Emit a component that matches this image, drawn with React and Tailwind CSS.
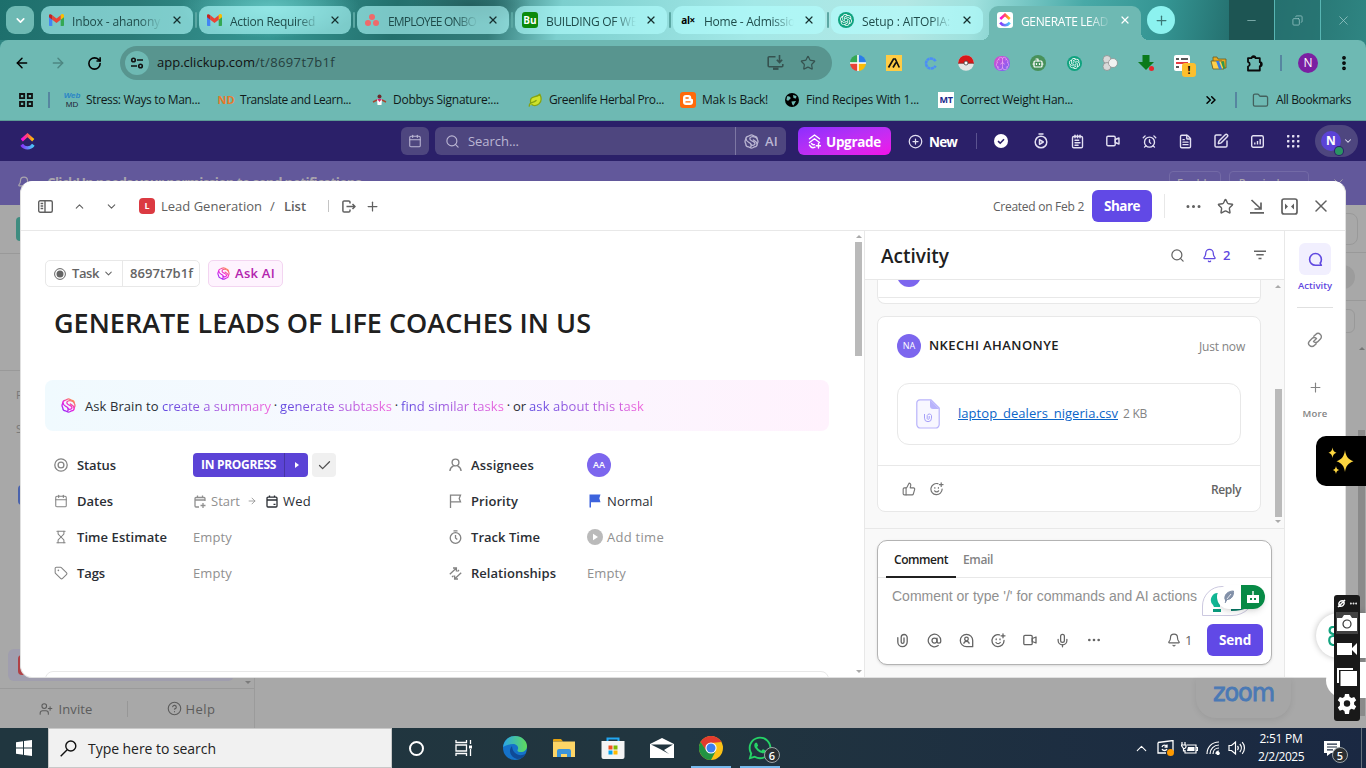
import { useLayoutEffect, useRef } from "react";
import {
  X, Plus, ArrowLeft, ArrowRight, RotateCw, ChevronDown, ChevronUp, Star, EllipsisVertical, Folder,
  ChevronsRight, Calendar, Search, CirclePlus, NotepadText, Video, AlarmClock, FileText, SquarePen,
  Ellipsis, Bell, Link2, ThumbsUp, AtSign, Mic, Check, Tag, Minus, Copy,
  CircleHelp, Leaf, Bot, Brain, Volume2, LogOut, Hourglass, UserPlus,
} from "lucide-react";
import { FaWhatsapp, FaBlogger } from "react-icons/fa";
import { SiOpenai } from "react-icons/si";

/* Text set to an exact width by spreading the difference over its letters. */
function Fit({ w, flat, className = "", children }) {
  const ref = useRef(null);
  useLayoutEffect(() => {
    const el = ref.current;
    el.style.letterSpacing = "0px";
    const natural = el.getBoundingClientRect().width;
    el.style.letterSpacing = (w - natural) / children.length + "px";
  }, [w, children]);
  return <span ref={ref} className={"inline-block shrink-0 whitespace-pre " + (flat ? "" : "translate-y-px ") + className}>{children}</span>;
}

const Cell = ({ className = "", children }) => (
  <div className={"flex shrink-0 items-center justify-center " + className}>{children}</div>
);

/* ---------- logos ---------- */
const Gmail = () => (
  <svg width="15" height="12" viewBox="0 0 15 12">
    <path d="M0 2v9.200c0 .4.3.8.8.8H3.300V5.500z" fill="#4285f4" />
    <path d="M15 2v9.200c0 .4-.3.8-.8.8h-2.500V5.500z" fill="#34a853" />
    <path d="M11.700 1.200v4.600L15 3.200V1.700C15 .2 13.300-.6 12.100.4z" fill="#fbbc04" />
    <path d="M3.300 5.800V1.200l4.200 3.200 4.200-3.200v4.600L7.500 9z" fill="#ea4335" />
    <path d="M0 1.700v1.500l3.300 2.600V1.200L2.900.9C1.700-.1 0 .2 0 1.700z" fill="#c5221f" />
  </svg>
);
const Asana = () => (
  <svg width="14" height="13" viewBox="0 0 14 13" fill="#f06a6a">
    <circle cx="7" cy="3" r="3" /><circle cx="3" cy="9" r="3" /><circle cx="11" cy="9" r="3" />
  </svg>
);
const ClickUp = ({ s = 16 }) => (
  <svg width={s} height={s} viewBox="0 0 16 16" fill="none" strokeWidth="3">
    <defs>
      <linearGradient id="cuTop" x1="0" x2="1"><stop stopColor="#ff02f0" /><stop offset=".5" stopColor="#ff5060" /><stop offset="1" stopColor="#ffc800" /></linearGradient>
      <linearGradient id="cuBot" x1="0" x2="1"><stop stopColor="#8930fd" /><stop offset="1" stopColor="#49ccf9" /></linearGradient>
    </defs>
    <path d="M2.600 6.800 8 2l5.400 4.800" stroke="url(#cuTop)" />
    <path d="M2.500 11C5.500 15 10.500 15 13.500 11" stroke="url(#cuBot)" />
  </svg>
);
const BrainIcon = ({ s = 15, grad }) => (
  <svg width={s} height={s} viewBox="0 0 16 16" fill="none" stroke={grad ? "url(#brainG)" : "currentColor"} strokeWidth="1.400" strokeLinejoin="round" strokeLinecap="round">
    <defs><linearGradient id="brainG" gradientUnits="userSpaceOnUse" x1="2" y1="15" x2="13" y2="1"><stop stopColor="#8a2cff" /><stop offset=".5" stopColor="#f01fd8" /><stop offset="1" stopColor="#ff9a3d" /></linearGradient></defs>
    <path d="M8 1c1.300 0 2 .9 3.200 1.200 1.600.3 2.800 1.100 2.800 2.600 0 1 .9 1.700.9 3.200s-.9 2.200-.9 3.200c0 1.500-1.200 2.300-2.800 2.600C10 14.100 9.300 15 8 15s-2-.9-3.200-1.200C3.200 13.500 2 12.700 2 11.200c0-1-.9-1.700-.9-3.200S2 5.800 2 4.800c0-1.500 1.200-2.300 2.800-2.600C6 1.900 6.700 1 8 1z" />
    <path d="M13.700 4.800C12.500 3 9.500 2.300 7.500 3.200 5.500 4.200 6 6.300 8 7.200s3.700 1.200 3.700 3c0 1.900-2.500 2.400-4.400 1.300" />
    <path d="M2.200 5.300c.2 2.800 2.300 3.300 4.200 4.300 1.700 1 1.700 3.200.5 4.600M14 10.500c-.3-2.500-2.200-3.300-4-4.200" />
  </svg>
);
const Clip = ({ s = 16 }) => (
  <svg width={s} height={s} viewBox="0 0 16 16" fill="none" stroke="currentColor" strokeWidth="1.400" strokeLinecap="round"><path d="M3 5v4.500a5 5 0 0 0 10 0V4.800a3.200 3.200 0 0 0-6.400 0v4.700a1.500 1.500 0 0 0 3 0V5.200" /></svg>
);

/* ---------- browser ---------- */
const tabs = [
  { icon: <Gmail />, label: "Inbox - ahanony", w: 88 },
  { icon: <Gmail />, label: "Action Required", w: 85 },
  { icon: <Asana />, label: "EMPLOYEE ONBO", w: 88 },
  { icon: <span className="grid size-4 place-items-center rounded-[3px] bg-[#0b8a0b] text-[10px] font-bold text-white">Bu</span>, label: "BUILDING OF WE", w: 91 },
  { icon: <span className="text-[10px] font-bold tracking-[-0.5px] text-black">al×</span>, label: "Home - Admissio", w: 91 },
  { icon: <span className="grid size-4 place-items-center rounded-full bg-[#10a37f] text-white"><SiOpenai size={12} /></span>, label: "Setup : AITOPIA:", w: 88 },
];

function TabStrip() {
  return (
    <div className="flex h-10 shrink-0 items-start bg-[radial-gradient(ellipse_90px_30px_at_270px_8px,#5fc0bd,transparent),radial-gradient(ellipse_60px_20px_at_470px_5px,#24605f,transparent),linear-gradient(100deg,#1d6f6c_0,#2a7a77_10%,#359693_20%,#23706d_29%,#347d7b_36%,#7ccfce_41%,#a3e8e7_55%,#b3e7e4_66%,#9fe1de_71%,#48a9a7_79%,#349492_85%,#226a69_91%,#2f8582_100%)] pt-1.5">
      <div className="ml-1.5 grid h-7 w-7 place-items-center rounded-[9px] bg-[#6eb9b3] text-white"><ChevronDown size={13} strokeWidth={3} /></div>
      <div className="ml-[7px] flex">
        {tabs.map((t, i) => (
          <div key={i} className="flex h-7 w-[158px] items-center">
            <div className="flex h-7 w-[152px] items-center rounded-[9px] bg-[#b4ffff]/60 pl-[7px]">
              <Cell className="w-4">{t.icon}</Cell>
              <div className="ml-2 w-[90px] overflow-hidden [mask-image:linear-gradient(90deg,#000_75%,transparent)]"><Fit flat w={t.w} className="text-[12px] text-[#1f4c4b]">{t.label}</Fit></div>
              <X size={12} strokeWidth={2.4} className="ml-[9px] text-[#16302f]" />
            </div>
            {i < 5 && <div className="mx-0.5 h-4 w-0.5 rounded bg-[#5aa7a3]" />}
          </div>
        ))}
      </div>
      <div className="relative flex h-[34px] w-[152px] items-start rounded-t-[9px] bg-[#6eb9b3] pl-2">
        <div className="absolute -left-2 bottom-0 size-2 bg-[radial-gradient(circle_at_0_0,transparent_8px,#6eb9b3_8px)]" />
        <div className="absolute -right-2 bottom-0 size-2 bg-[radial-gradient(circle_at_100%_0,transparent_8px,#6eb9b3_8px)]" />
        <div className="flex h-7 items-center">
          <span className="grid size-4 place-items-center rounded-[3px] bg-white"><ClickUp s={14} /></span>
          <div className="ml-2 w-[90px] overflow-hidden [mask-image:linear-gradient(90deg,#000_75%,transparent)]"><Fit flat w={87} className="text-[12px] text-white">GENERATE LEAD</Fit></div>
          <X size={12} strokeWidth={2.4} className="ml-2 text-white" />
        </div>
      </div>
      <div className="ml-1.5 grid size-7 place-items-center rounded-full bg-[#8cf2ef] text-[#3b7876]"><Plus size={15} /></div>
      <div className="-mt-1.5 ml-auto flex h-10 w-[137px] text-[#9ecac9]">
        <Cell className="w-[45px] bg-[#1d5553]"><Minus size={13} strokeWidth={1.3} /></Cell>
        <Cell className="w-[46px] border-l border-[#58b5b3] bg-[#27716f]/60"><Copy size={11} strokeWidth={1.6} className="-scale-x-100" /></Cell>
        <Cell className="w-[46px] border-l border-[#58b5b3]"><X size={15} strokeWidth={1.2} /></Cell>
      </div>
    </div>
  );
}

function Toolbar() {
  return (
    <div className="flex h-[45px] shrink-0 items-center rounded-t-[8px] bg-[#6eb9b3] pt-px text-black">
      <Cell className="ml-1 w-9"><ArrowLeft size={16} strokeWidth={2.200} /></Cell>
      <Cell className="w-9 text-[#4d8782]"><ArrowRight size={16} strokeWidth={2.200} /></Cell>
      <Cell className="w-9"><RotateCw size={15} strokeWidth={2.500} /></Cell>
      <div className="ml-2 flex h-[34px] w-[712px] items-center rounded-full bg-[#58958f] pl-[5px]">
        <div className="grid size-6 place-items-center rounded-full bg-[#6eb9b3]">
          <svg width="14" height="14" viewBox="0 0 14 14" fill="none" stroke="#111" strokeWidth="1.600"><circle cx="3.500" cy="4" r="1.800" /><path d="M7 4h6M1 10h6" /><circle cx="10.500" cy="10" r="1.800" /></svg>
        </div>
        <div className="ml-2 flex text-[13px] text-[#111]"><Fit flat w={98}>app.clickup.com</Fit><Fit flat w={80} className="text-[#25403e]">/t/8697t7b1f</Fit></div>
        <svg className="ml-auto mr-4 text-[#35524f]" width="17" height="16" viewBox="0 0 17 16" fill="none" stroke="currentColor" strokeWidth="1.600"><path d="M8.500 1.800H2.200a1 1 0 0 0-1 1v8a1 1 0 0 0 1 1h12.600a1 1 0 0 0 1-1V9M12.500 0v7M9.800 4.800l2.700 2.700 2.700-2.700" /><path d="M6 13.700h5.500" strokeWidth="2.400" /></svg>
        <Star size={16} strokeWidth={1.800} className="mr-4 text-[#35524f]" />
      </div>
      <div className="ml-2 flex w-[432px] text-white">
        <Cell className="w-9"><svg width="16" height="16" viewBox="0 0 16 16"><path d="M8 8V0A8 8 0 0 0 0 8z" fill="#34a853" /><path d="M8 8h8A8 8 0 0 0 8 0z" fill="#2b7de9" /><path d="M8 8v8A8 8 0 0 1 0 8z" fill="#ea4335" /><path d="M8 8v8a8 8 0 0 0 8-8z" fill="#fbbc05" /><path d="M8 0v16M0 8h16" stroke="#fff" strokeWidth="1.600" /></svg></Cell>
        <Cell className="w-9"><svg width="16" height="16" viewBox="0 0 16 16"><path fill="#fc4" d="M0 0h16v16H0z" /><path d="m2.500 12.500 5-8.500h1.800l4 8.500M7 12.500l3-5" fill="none" stroke="#111" strokeWidth="1.700" /></svg></Cell>
        <Cell className="w-9"><svg width="13" height="13" viewBox="0 0 13 13"><path d="M11.500 4.300a5 5 0 1 0 0 4.400" fill="none" stroke="#4b8df8" strokeWidth="2.600" strokeDasharray="3 .4" /></svg></Cell>
        <Cell className="w-9"><svg width="16" height="16" viewBox="0 0 16 16"><circle cx="8" cy="8" r="7.800" fill="#e4e4e4" /><path d="M.2 8a7.800 7.800 0 0 1 15.600 0z" fill="#d81818" /><path d="M0 8.300h16" stroke="#7a2020" strokeWidth=".8" /><circle cx="8" cy="8" r="2" fill="#fff" stroke="#444" strokeWidth=".8" /></svg></Cell>
        <Cell className="w-9"><span className="grid h-[15px] w-4 place-items-center rounded-[7px] bg-gradient-to-br from-[#e048c0] via-[#a855e8] to-[#6a6af0] text-[#f3b0f0]"><Brain size={15} strokeWidth={1} /></span></Cell>
        <Cell className="w-9"><span className="grid size-4 place-items-center rounded-full bg-[#47915a]"><Bot size={12} strokeWidth={2.400} /></span></Cell>
        <Cell className="w-9"><span className="grid size-[15px] place-items-center rounded-full bg-[#10a37f]"><SiOpenai size={11} /></span></Cell>
        <Cell className="w-9"><svg width="16" height="16" viewBox="0 0 16 16" fill="#d9d9d9" stroke="#888" strokeWidth=".7"><circle cx="5" cy="4.500" r="4" /><circle cx="5" cy="11.500" r="4" /><circle cx="11" cy="8" r="4.500" fill="#f2f2f2" /></svg></Cell>
        <Cell className="w-9"><svg width="17" height="16" viewBox="0 0 17 16"><path d="M4.500 0h7v7H16l-8 8-8-8h4.500z" fill="#0b7a1b" /><circle cx="13.500" cy="13.500" r="2.500" fill="#e8262d" /></svg></Cell>
        <Cell className="relative w-9">
          <svg width="16" height="16" viewBox="0 0 16 16"><rect width="16" height="16" rx="2" fill="#fff" /><path d="M2 4h3M7 4h7M2 12h3" stroke="#222" strokeWidth="1.600" /><path d="M2 8h12" stroke="#e0262d" strokeWidth="1.800" /></svg>
          <span className="absolute left-[18px] top-2 grid h-3.5 w-3.5 place-items-center rounded-[3px] bg-[#fdbf2d] text-[10px] font-bold text-black">!</span>
        </Cell>
        <Cell className="w-9"><svg width="17" height="14" viewBox="0 0 17 14"><path d="M3 1h4l1 2h8v9H3z" fill="#e9a820" stroke="#6b5a20" strokeWidth=".8" /><path d="M1 5h11l2 8H3z" fill="#ffd04a" stroke="#6b5a20" strokeWidth=".8" /><path d="m6 5 3 0 3 8H9z" fill="#3a7de0" /><path d="m11 6 3-1 1 7-1.500 1z" fill="#2f9a4d" /></svg></Cell>
        <Cell className="w-9"><svg width="17" height="17" viewBox="0 0 17 17" fill="none" stroke="#0a0a0a" strokeWidth="1.800" strokeLinejoin="round"><path d="M2 3.200h3.500a2 2 0 0 1 4 0h4.300v4a2 2 0 0 1 0 4V15.500H2v-4a2.400 2.400 0 0 0 0-4.600z" /><path d="M5.500 3a2 1.800 0 0 1 4 0zM14 7.300a1.800 2 0 0 1 0 4z" fill="#0a0a0a" stroke="none" /></svg></Cell>
      </div>
      <div className="ml-2 h-4 w-0.5 bg-[#5686a0]" />
      <div className="ml-4 grid size-5 place-items-center rounded-full bg-[#7b1fa2] text-[12px] text-white">N</div>
      <EllipsisVertical size={18} strokeWidth={3} className="ml-[17px]" />
    </div>
  );
}

const Bookmark = ({ icon, w, label, box }) => (
  <div className={"flex shrink-0 items-center gap-1.5 " + box}><Cell className="w-4">{icon}</Cell><Fit w={w} flat className="text-[12px] text-[#101a1a]">{label}</Fit></div>
);

function Bookmarks() {
  return (
    <div className="flex h-9 shrink-0 items-center border-b border-[#5b9b96] bg-[#6eb9b3] pb-[5px] text-black">
      <svg className="ml-[19px]" width="14" height="14" viewBox="0 0 14 14" fill="none" stroke="#111" strokeWidth="1.800"><path d="M1 1h4.200v4.200H1zM8.800 1H13v4.200H8.800zM1 8.800h4.200V13H1zM8.800 8.800H13V13H8.800z" /></svg>
      <div className="ml-[15px] mr-[14px] h-4 w-0.5 bg-[#5686a0]" />
      <Bookmark box="w-[154px]" w={114} label="Stress: Ways to Man..." icon={<span className="flex flex-col items-center font-['Liberation_Sans',sans-serif] text-[8px] leading-[9.500px]"><i className="font-bold text-[#2b86c6]">Web</i><span className="text-[#223]">MD</span></span>} />
      <Bookmark box="w-[153px]" w={111} label="Translate and Learn..." icon={<span className="text-[11px] font-bold text-[#e8792b]">ND</span>} />
      <Bookmark box="w-[156px]" w={106} label="Dobbys Signature:..." icon={<svg width="15" height="12" viewBox="0 0 15 12"><circle cx="7.500" cy="2.500" r="2" fill="#6b2a2a" /><path d="M5 5h5l-.5 6h-4z" fill="#fff" /><path d="m5 5 2.500 3L10 5z" fill="#d4237a" /><path d="m5 6-4 2M10 6l4 2" stroke="#a8452d" strokeWidth="1.500" /></svg>} />
      <Bookmark box="w-[153px]" w={115} label="Greenlife Herbal Pro..." icon={<Leaf size={15} fill="#cfe32b" className="text-[#86a312]" />} />
      <Bookmark box="w-[104px]" w={66} label="Mak Is Back!" icon={<span className="grid size-4 place-items-center rounded-[3px] bg-[#ff6a0a]"><svg width="10" height="10" viewBox="0 0 10 10"><path d="M3 0h2.500a2.700 2.700 0 0 1 2.700 2.700c0 1 .4 1.100 1 1.300.6.100.8.300.8.900V7a3 3 0 0 1-3 3H3a3 3 0 0 1-3-3V3a3 3 0 0 1 3-3z" fill="#fff" /><path d="M3 3h2.200M3 6.900h4" stroke="#ff6a0a" strokeWidth="1.400" strokeLinecap="round" /></svg></span>} />
      <Bookmark box="w-[154px]" w={113} label="Find Recipes With 1..." icon={<span className="grid size-3.5 place-items-center rounded-full bg-black text-[#6eb9b3]"><svg width="14" height="14" viewBox="0 0 14 14" fill="currentColor"><path d="M2 3.500C4 2.500 6 4 5.500 5.500S3 6.500 3.500 8L1.500 7zM8 2l3.500 1L11 5.500 8.500 5zM6.500 8.500l4.500-.5-2.500 4.500C7 12 7 10.500 6.500 8.500z" /></svg></span>} />
      <Bookmark box="w-[265px]" w={113} label="Correct Weight Han..." icon={<span className="grid size-4 place-items-center bg-white text-[9px] font-bold tracking-tight text-[#1b2a8c]">MT</span>} />
      <ChevronsRight size={16} strokeWidth={2.200} />
      <div className="ml-4 mr-[15px] h-4 w-0.5 bg-[#5686a0]" />
      <Folder size={17} strokeWidth={1.800} className="mr-[7px] text-[#43605d]" />
      <Fit flat w={75} className="text-[12px] text-[#101a1a]">All Bookmarks</Fit>
    </div>
  );
}

/* ---------- ClickUp page behind the dialog ---------- */
function AppNav() {
  return (
    <div className="flex h-10 shrink-0 items-center bg-[#2b2069] text-[#e3e0f2]">
      <div className="ml-[19px] w-[382px]"><ClickUp s={17} /></div>
      <div className="grid size-7 place-items-center rounded-md bg-[#4e467f] text-[#bbb6d3]"><Calendar size={14} strokeWidth={1.800} /></div>
      <div className="ml-1.5 flex h-7 w-[351px] items-center rounded-md bg-[#4e467f] text-[#bbb6d3]">
        <Search size={15} strokeWidth={1.800} className="ml-2.5 mr-2" />
        <Fit w={51} className="text-[13px]">Search...</Fit>
        <div className="ml-auto flex h-7 items-center gap-1.5 border-l border-[#7d77a3] pl-2 pr-2"><BrainIcon /><Fit w={13} className="text-[13px] font-semibold">AI</Fit></div>
      </div>
      <div className="ml-3 flex h-7 w-[93px] items-center rounded-md bg-gradient-to-br from-[#8b2cff] to-[#f20be8] pl-2.5 text-white">
        <svg width="13" height="15" viewBox="0 0 13 15" fill="none" stroke="currentColor" strokeWidth="1.400" strokeLinecap="round" strokeLinejoin="round"><path d="m1.500 4.800 5-3.800 5 3.800M1.500 8.500l2-1.500M11.500 8.500 6.500 4.800 3.500 7M1.500 11.200c1.300 2.400 3.500 3 5.500 2M3.500 9.500c1 1.300 2 1.500 3 1.200M10.500 9.500v4.500M8.300 11.700h4.500" /></svg>
        <Fit w={55} className="ml-[5px] text-[13.500px] font-bold">Upgrade</Fit>
      </div>
      <CirclePlus size={15} className="ml-[17px]" />
      <Fit w={28} className="ml-[6px] text-[13.500px] font-bold text-white">New</Fit>
      <div className="ml-[19px] h-4 w-px bg-[#5b5390]" />
      <Cell className="ml-1.5 w-9"><svg width="14" height="14" viewBox="0 0 14 14"><circle cx="7" cy="7" r="7" fill="#fff" /><path d="m4 7.200 2.200 2 3.800-4" fill="none" stroke="#2b2069" strokeWidth="1.600" /></svg></Cell>
      <Cell className="ml-1 w-9"><svg width="16" height="16" viewBox="0 0 16 16" fill="none" stroke="currentColor" strokeWidth="1.500"><circle cx="8" cy="9" r="5.800" /><path d="M5.500 1h5M6.500 6.700v4.600l3.800-2.300z" strokeLinejoin="round" /></svg></Cell>
      <Cell className="w-9"><NotepadText size={15} strokeWidth={2.200} /></Cell>
      <Cell className="w-9"><svg width="14" height="12" viewBox="0 0 14 12" fill="none" stroke="currentColor" strokeWidth="1.400" strokeLinejoin="round"><rect x=".8" y="1.300" width="8.400" height="9.400" rx="1.200" /><path d="M9.200 4.500 13 3v6L9.200 7.500z" /></svg></Cell>
      <Cell className="w-9"><AlarmClock size={15} strokeWidth={2.200} /></Cell>
      <Cell className="w-9"><FileText size={15} strokeWidth={2.200} /></Cell>
      <Cell className="w-9"><SquarePen size={16} strokeWidth={2.200} /></Cell>
      <Cell className="w-9"><svg width="13" height="13" viewBox="0 0 13 13" fill="none" stroke="currentColor" strokeWidth="1.400"><rect x=".7" y=".7" width="11.600" height="11.600" rx="1.500" /><path d="M3.800 9.500v-2M6.500 9.500V6M9.200 9.500V4" /></svg></Cell>
      <Cell className="w-9"><svg width="13" height="13" viewBox="0 0 13 13" fill="currentColor">{[0, 5, 10].map((y) => [0, 5, 10].map((x) => <rect key={x + "-" + y} x={x} y={y} width="2.400" height="2.400" rx=".6" />))}</svg></Cell>
      <div className="ml-1 flex h-8 w-[43px] items-center rounded-full bg-[#4e467f] pl-1.5">
        <div className="relative grid size-5 place-items-center rounded-full bg-[#5b43d6] text-[12px] font-bold text-white">N
          <span className="absolute -bottom-1 -right-0.5 size-2 rounded-full bg-[#2a9463] ring-1 ring-[#2b2069]" /></div>
        <ChevronDown size={10} strokeWidth={2.500} className="ml-[2px]" />
      </div>
    </div>
  );
}

function Banner() {
  return (
    <div className="flex h-11 shrink-0 items-center bg-[#62589b] pl-[17px] text-[#a9a5ad]">
      <Bell size={14} />
      <Fit flat w={314} className="ml-4 text-[13.500px] font-bold">ClickUp needs your permission to send notifications</Fit>
      <div className="ml-auto mr-2 flex h-6 w-[52px] items-center justify-center rounded border border-[#736aa6] text-[11px] font-semibold">Enable</div>
      <div className="mr-[22px] flex h-6 w-20 items-center justify-center rounded border border-[#736aa6] text-[11px] font-semibold">Remind me</div>
      <X size={15} strokeWidth={1.500} className="mr-[20px]" />
    </div>
  );
}

function Backdrop() {
  return (
    <div className="flex min-h-0 flex-1 bg-[#a8a8a8] text-[#5c5c5c]">
      <div className="flex w-[255px] flex-col border-r border-[#9b9b9b]">
        <div className="flex h-[49px] shrink-0 items-center border-b border-[#999] pl-4"><div className="size-6 rounded bg-[#3f8c80]" /></div>
        <div className="flex h-[117px] shrink-0 flex-col gap-4 border-b border-[#999] pl-5 pt-10"><span className="h-0.5 w-1 bg-[#8e8e8e]" /><span className="mt-4 h-0.5 w-1 bg-[#8e8e8e]" /></div>
        <div className="flex flex-1 flex-col pt-3 text-[11px] text-[#777]">
          <span className="ml-4 h-6 leading-6">Favorites</span>
          <span className="ml-4 mt-2.5 h-6 leading-6">Spaces</span>
          <span className="ml-[18px] mt-[44px] size-5 rounded bg-[#4a63ad]" />
          <span className="ml-2 mt-auto flex h-8 w-[226px] items-center rounded-md bg-[#a09eae] pl-2.5"><span className="size-5 rounded bg-[#b04046]" /></span>
          <span className="mb-1 ml-[245px] h-0 w-0 border-x-[3px] border-t-[3px] border-x-transparent border-t-[#7b7b7b]" />
        </div>
        <div className="flex h-10 shrink-0 items-center border-t border-[#9a9a9a]">
          <div className="flex w-[127px] items-center justify-center gap-1.5 pl-1"><UserPlus size={14} strokeWidth={1.800} /><Fit w={34} className="text-[13px]">Invite</Fit></div>
          <div className="h-4 w-px bg-[#979797]" />
          <div className="flex flex-1 items-center justify-center gap-1"><CircleHelp size={15} strokeWidth={1.800} /><Fit w={30} className="text-[13px]">Help</Fit></div>
        </div>
      </div>
      <div className="flex flex-1 flex-col items-end">
        <div className="flex h-12 w-full items-center justify-end border-b border-[#999] pr-2"><div className="h-8 w-20 rounded-lg border border-[#999]" /></div>
        <div className="flex h-12 w-full items-center justify-end border-b border-[#999] pr-[11px]"><div className="size-6 rounded-full bg-[#9c9c9c]" /></div>
        <div className="flex h-10 w-full items-center justify-end pr-[11px]"><div className="h-6 w-20 rounded-md border border-[#999]" /></div>
        <div className="flex w-[9px] flex-1 flex-col items-center pt-1.5"><span className="border-x-[3px] border-b-[3px] border-x-transparent border-b-[#777]" /><span className="mt-20 h-[286px] w-[7px] bg-[#8a8a8a]" /></div>
      </div>
    </div>
  );
}

/* ---------- task dialog ---------- */
function DialogHeader() {
  return (
    <div className="flex h-[49px] shrink-0 items-center border-b border-[#e8e8e8] text-[#606060]">
      <svg className="ml-[17px]" width="15" height="13" viewBox="0 0 15 13" fill="none" stroke="currentColor" strokeWidth="1.400"><rect x=".7" y=".7" width="13.600" height="11.600" rx="1.500" /><path d="M7 .7v11.600M2.600 3.500h2.600M2.600 6h2.600M2.600 8.500h2.600" /></svg>
      <Cell className="ml-[10px] w-8"><ChevronUp size={13} strokeWidth={2} /></Cell>
      <Cell className="w-8"><ChevronDown size={13} strokeWidth={2} /></Cell>
      <div className="ml-3 grid size-4 place-items-center rounded bg-[#db3a42] text-[9px] font-bold text-white">L</div>
      <Fit w={101} className="ml-1.5 text-[13px]">Lead Generation</Fit>
      <Fit w={6} className="ml-2 mr-2 text-[13px]">/</Fit>
      <Fit w={22} className="text-[13px] font-semibold">List</Fit>
      <div className="ml-[22px] h-3 w-px bg-[#c4c4c4]" />
      <svg className="ml-[13px]" width="14" height="13" viewBox="0 0 14 13" fill="none" stroke="currentColor" strokeWidth="1.500" strokeLinejoin="round"><path d="M8 3.500V2.200A1.300 1.300 0 0 0 6.700.9H2.200A1.300 1.300 0 0 0 .9 2.200v8.600a1.300 1.300 0 0 0 1.300 1.300h4.500A1.300 1.300 0 0 0 8 10.800V9.500M4.500 6.500h8.500M10.500 4l2.500 2.500L10.500 9" /></svg>
      <Plus size={15} strokeWidth={2} className="ml-[9px]" />
      <Fit w={91} className="ml-auto text-[12px]">Created on Feb 2</Fit>
      <div className="ml-2 grid h-8 w-[60px] place-items-center rounded-md bg-[#6149e6] text-white"><Fit flat w={36} className="text-[13.500px] font-bold">Share</Fit></div>
      <div className="ml-3 h-6 w-px bg-[#e8e8e8]" />
      <div className="ml-3 mr-2 flex">
        <Cell className="w-8"><Ellipsis size={19} strokeWidth={1.800} /></Cell>
        <Cell className="w-8"><Star size={17} /></Cell>
        <Cell className="w-8"><svg width="16" height="16" viewBox="0 0 16 16" fill="none" stroke="currentColor" strokeWidth="1.700"><path d="M1 14.800h14M2.500 2l9 8.500M12 4.500V11H5.500" /></svg></Cell>
        <Cell className="w-8"><svg width="17" height="17" viewBox="0 0 17 17"><rect x="1" y="1" width="15" height="15" rx="2" fill="none" stroke="currentColor" strokeWidth="1.700" /><path d="m4 5.500 3 3-3 3zM13 5.500l-3 3 3 3z" fill="currentColor" /></svg></Cell>
        <Cell className="w-8"><X size={20} strokeWidth={1.800} /></Cell>
      </div>
    </div>
  );
}

const Field = ({ icon, label, w, children }) => (
  <div className="flex h-9 w-[394px] items-center">
    <Cell className="w-[14px] text-[#838383]">{icon}</Cell>
    <div className="ml-[9px] flex w-[116px]"><Fit w={w} className="text-[13px] font-semibold text-[#2a2e34]">{label}</Fit></div>
    <div className="flex items-center">{children}</div>
  </div>
);
const Empty = () => <Fit w={39} className="text-[13px] text-[#909090]">Empty</Fit>;
const AiLink = ({ w, children }) => <Fit w={w} className="bg-gradient-to-r from-[#5f48e0] to-[#f062dc] bg-clip-text text-transparent">{children}</Fit>;
const Cal = ({ plus }) => (
  <svg width="12" height="13" viewBox="0 0 12 13" fill="none" stroke="currentColor" strokeWidth="1.300"><path d={plus ? "M11 6V3.500a1 1 0 0 0-1-1H2a1 1 0 0 0-1 1v7.500a1 1 0 0 0 1 1h3M1 5h10M3.500.5v2M8.500.5v2M9 8v5M6.500 10.500h5" : "M2 2.200h8a1 1 0 0 1 1 1v7.800a1 1 0 0 1-1 1H2a1 1 0 0 1-1-1V3.200a1 1 0 0 1 1-1zM1 5h10M3.500.5v2M8.500.5v2M7.500 9.300h2"} /></svg>
);

function TaskPane() {
  return (
    <div className="flex w-[844px] shrink-0">
      <div className="flex w-[833px] flex-col overflow-hidden pl-[25px] pt-[29px]">
        <div className="flex h-[27px] shrink-0 items-center text-[#646464]">
          <div className="flex h-[27px] w-[155px] items-center rounded-[5px] border border-[#e8e8e8]">
            <svg className="ml-2" width="12" height="12" viewBox="0 0 12 12"><circle cx="6" cy="6" r="5.400" fill="none" stroke="currentColor" /><circle cx="6" cy="6" r="3.500" fill="currentColor" /></svg>
            <Fit flat w={27} className="ml-1.5 text-[13px] font-semibold">Task</Fit>
            <ChevronDown size={11} strokeWidth={2.200} className="ml-1" />
            <div className="ml-[8px] flex h-[25px] items-center border-l border-[#e8e8e8] pl-[7px]"><Fit flat w={63} className="text-[13px] font-semibold">8697t7b1f</Fit></div>
          </div>
          <div className="ml-2 flex h-[27px] w-[75px] items-center rounded-[5px] border border-[#f3d5f1] bg-[#fef3fe] pl-2"><BrainIcon s={13} grad /><Fit flat w={40} className="ml-[5px] text-[13px] font-semibold text-[#b325ae]">Ask AI</Fit></div>
        </div>
        <div className="ml-[9px] mt-4 flex h-10 shrink-0 items-center"><Fit flat w={537} className="text-[27px] font-semibold text-[#202020]">GENERATE LEADS OF LIFE COACHES IN US</Fit></div>
        <div className="mt-[37px] flex h-[51px] w-[784px] shrink-0 items-center rounded-lg bg-gradient-to-r from-[#f0fafe] via-[#f9f8ff] to-[#fff2fd] pl-4 text-[13px] text-[#2a2e34]">
          <BrainIcon grad />
          <Fit w={77} className="ml-[9px]">Ask Brain to </Fit><AiLink w={109}>create a summary</AiLink>
          <span className="w-[9px] text-center">·</span><AiLink w={112}>generate subtasks</AiLink>
          <span className="w-[9px] text-center">·</span><AiLink w={103}>find similar tasks</AiLink>
          <span className="w-[9px] text-center">·</span><Fit w={16}>or </Fit><AiLink w={115}>ask about this task</AiLink>
        </div>
        <div className="ml-[9px] mt-4 flex shrink-0">
          <div>
            <Field w={39} label="Status" icon={<svg width="14" height="14" viewBox="0 0 14 14" fill="none" stroke="currentColor" strokeWidth="1.300"><circle cx="7" cy="7" r="6.200" /><circle cx="7" cy="7" r="2.900" /></svg>}>
              <div className="flex h-6 w-[115px] items-center rounded bg-[#5b43d6] pl-2 text-white">
                <Fit flat w={75} className="text-[12px] font-bold">IN PROGRESS</Fit>
                <div className="ml-2 grid h-6 w-6 place-items-center border-l border-[#4635a5]"><span className="border-y-[3px] border-l-4 border-y-transparent border-l-white" /></div>
              </div>
              <div className="ml-1 grid size-6 place-items-center rounded bg-[#f0f0f0] text-[#505050]"><Check size={15} /></div>
            </Field>
            <Field w={36} label="Dates" icon={<Calendar size={14} strokeWidth={1.800} />}>
              <span className="flex items-center text-[#909090]"><span className="ml-[1px] mr-[5px]"><Cal plus /></span><Fit w={29} className="text-[13px]">Start</Fit><ArrowRight size={10} className="ml-[7px] mr-[9px]" /></span>
              <span className="flex items-center text-[#2a2e34]"><Cal /><Fit w={28} className="ml-[5px] text-[13px]">Wed</Fit></span>
            </Field>
            <Field w={90} label="Time Estimate" icon={<Hourglass size={14} strokeWidth={1.800} />}><Empty /></Field>
            <Field w={28} label="Tags" icon={<Tag size={14} strokeWidth={1.800} />}><Empty /></Field>
          </div>
          <div>
            <Field w={63} label="Assignees" icon={<svg width="13" height="14" viewBox="0 0 13 14" fill="none" stroke="currentColor" strokeWidth="1.400"><circle cx="6.500" cy="4.500" r="3.400" /><path d="M.9 13c.2-2.500 1.500-4.300 3.600-5.200M12.100 13c-.2-2.500-1.500-4.300-3.600-5.200" /></svg>}><div className="grid size-6 place-items-center rounded-full bg-[#7c66ee] text-[9px] font-semibold text-white">AA</div></Field>
            <Field w={47} label="Priority" icon={<svg width="13" height="14" viewBox="0 0 13 14" fill="none" stroke="currentColor" strokeWidth="1.300"><path d="M1.500 14V1.200h10L10.200 4.500l1.300 3.300h-10" /></svg>}><svg className="ml-0.5" width="12" height="14" viewBox="0 0 12 14" fill="#3d63dd"><path d="M.5.500h11L10.300 4.300l1.200 3.900H2V13.500H.5z" /></svg><Fit w={46} className="ml-1.5 text-[13px] text-[#2a2e34]">Normal</Fit></Field>
            <Field w={69} label="Track Time" icon={<svg width="13" height="14" viewBox="0 0 13 14" fill="none" stroke="currentColor" strokeWidth="1.300"><circle cx="6.500" cy="8" r="5.300" /><path d="M4.500.8h4M6.500 5v3l1.800 1.500" /></svg>}><svg width="16" height="16" viewBox="0 0 16 16"><circle cx="8" cy="8" r="8" fill="#bababa" /><path d="M6 4.700v6.600L11 8z" fill="#fff" /></svg><Fit w={57} className="ml-1 text-[13px] text-[#909090]">Add time</Fit></Field>
            <Field w={85} label="Relationships" icon={<svg width="13" height="13" viewBox="0 0 13 13" fill="none" stroke="currentColor" strokeWidth="1.300"><path d="M.8 7.200 7.200 1.200M4 1h3.400v3.400M12.200 5.800 5.800 11.800M9 12H5.600V8.600M3 10l1.500-1.300M8.500 4.500 10 3" /></svg>}><Empty /></Field>
          </div>
        </div>
        <div className="mt-[80px] h-8 w-[784px] shrink-0 rounded-lg border border-[#e8e8e8]" />
      </div>
      <div className="flex w-[11px] flex-col items-center">
        <span className="mt-1 border-x-[3px] border-b-[3px] border-x-transparent border-b-[#aaa]" />
        <span className="mt-1 h-[114px] w-[7px] bg-[#bababa]" />
        <span className="mb-1 mt-auto border-x-[3px] border-t-[3px] border-x-transparent border-t-[#aaa]" />
      </div>
    </div>
  );
}

const SmilePlus = ({ s = 15 }) => (
  <svg width={s} height={s} viewBox="0 0 15 15" fill="none" stroke="currentColor" strokeWidth="1.300" strokeLinecap="round"><path d="M8.500 1.800A6 6 0 1 0 13 7.500M5 9.500c1 1.500 3.200 1.500 4.200 0M12 .8v4M10 2.800h4M5.200 6v.7M9 6v.7" /></svg>
);

function ActivityPane() {
  return (
    <div className="flex w-[421px] shrink-0 flex-col border-x border-[#e8e8e8] bg-[#f9f9f9]">
      <div className="flex h-[49px] shrink-0 items-center border-b border-[#e8e8e8] bg-white pl-4 text-[#646464]">
        <Fit w={68} className="text-[19px] font-semibold text-[#202020]">Activity</Fit>
        <Search size={15} strokeWidth={2} className="ml-auto" />
        <Bell size={15} strokeWidth={2} className="ml-[17px] text-[#5f48e0]" />
        <Fit w={8} className="ml-[6px] text-[13px] font-semibold text-[#5f48e0]">2</Fit>
        <svg className="ml-[23px] mr-[18px]" width="12" height="10" viewBox="0 0 12 10" fill="none" stroke="currentColor" strokeWidth="1.500"><path d="M0 1.200h12M2.300 4.800h7.400M4.500 8.400h3" /></svg>
      </div>
      <div className="flex h-[249px] shrink-0 border-b border-[#e8e8e8]">
        <div className="ml-3 w-[384px]">
          <div className="flex h-6 flex-col overflow-hidden rounded-b-lg border border-t-0 border-[#e8e8e8] bg-white">
            <div className="flex h-[18px] items-end overflow-hidden border-b border-[#e8e8e8] pb-[10px] pl-[19px]"><div className="size-6 rounded-full bg-[#7c66ee]" /></div>
          </div>
          <div className="mt-3 h-[196px] rounded-lg border border-[#e8e8e8] bg-white">
            <div className="flex h-[58px] items-center pl-[19px] pr-[15px]">
              <div className="grid size-6 place-items-center rounded-full bg-[#7c66ee] text-[9px] font-medium text-white">NA</div>
              <Fit flat w={130} className="ml-2 text-[13px] font-semibold text-[#202020]">NKECHI AHANONYE</Fit>
              <Fit w={46} className="ml-auto text-[12px] text-[#838383]">Just now</Fit>
            </div>
            <div className="ml-[19px] mt-2 flex h-[62px] w-[344px] items-center rounded-xl border border-[#e8e8e8] pl-[18px]">
              <svg width="24" height="30" viewBox="0 0 24 30"><path d="M4 .8h11L23.200 9v16.500a3.500 3.500 0 0 1-3.500 3.500H4.300A3.500 3.500 0 0 1 .8 25.500v-21A3.500 3.500 0 0 1 4 .8z" fill="#f8f7ff" stroke="#b9b4fb" strokeWidth="1.200" /><path d="M14 .8 23.200 10H17a3 3 0 0 1-3-3z" fill="#b9b4fb" /><path d="M8.500 15v4.200a3.500 3.500 0 0 0 7 0v-2.700a2.300 2.300 0 0 0-4.300 0v3.200a1.100 1.100 0 0 0 2 0V17" fill="none" stroke="#a6a0f8" /></svg>
              <Fit flat w={160} className="ml-[18px] text-[13px] text-[#0b65c8] underline">laptop_dealers_nigeria.csv</Fit>
              <Fit flat w={24} className="ml-[5px] text-[12px] text-[#838383]">2 KB</Fit>
            </div>
            <div className="mt-5 flex h-[47px] items-center border-t border-[#e8e8e8] pl-6 pr-[19px] text-[#757575]">
              <ThumbsUp size={14} strokeWidth={1.900} /><span className="ml-3.5"><SmilePlus s={14} /></span>
              <Fit w={30} className="ml-auto text-[12px] font-semibold text-[#646464]">Reply</Fit>
            </div>
          </div>
        </div>
        <div className="ml-auto mr-0.5 flex w-2 flex-col items-center">
          <span className="mt-[5px] border-x-[3px] border-b-[3px] border-x-transparent border-b-[#aaa]" />
          <span className="mt-[101px] h-[128px] w-[7px] bg-[#bababa]" />
          <span className="mt-[3px] border-x-[3px] border-t-[3px] border-x-transparent border-t-[#aaa]" />
        </div>
      </div>
      <div className="ml-3 mt-[11px] flex h-[125px] w-[395px] flex-col rounded-[10px] border border-[#b3b3b3] bg-white shadow-sm">
        <div className="flex h-[37px] border-b border-[#e8e8e8] pl-2 text-[12px] font-semibold">
          <div className="flex h-[37px] w-[70px] items-center justify-center border-b-2 border-[#202020] text-[#202020]"><Fit w={54}>Comment</Fit></div>
          <div className="ml-[7px] flex items-center text-[#838383]"><Fit w={30}>Email</Fit></div>
        </div>
        <div className="flex h-[38px] items-center pb-0.5 pl-3.5 font-['Liberation_Sans',sans-serif]"><Fit flat w={305} className="text-[14px] text-[#909090]">Comment or type '/' for commands and AI actions</Fit></div>
        <div className="flex h-12 items-center pl-2 text-[#646464]">
          <Cell className="w-8"><Clip s={15} /></Cell>
          <Cell className="w-8"><AtSign size={15} strokeWidth={2} /></Cell>
          <Cell className="w-8"><svg width="15" height="15" viewBox="0 0 15 15" fill="none" stroke="currentColor" strokeWidth="1.300"><path d="M13.700 13.700H7.500a6.200 6.200 0 1 1 6.200-6.200z" strokeLinejoin="round" /><circle cx="7.500" cy="6" r="1.800" /><path d="M4.800 10.800c.3-3.200 5.100-3.200 5.400 0" /></svg></Cell>
          <Cell className="w-8"><SmilePlus /></Cell>
          <Cell className="w-8"><svg width="14" height="12" viewBox="0 0 14 12" fill="none" stroke="currentColor" strokeWidth="1.300" strokeLinejoin="round"><rect x=".8" y="1.300" width="8.400" height="9.400" rx="1.200" /><path d="M9.200 4.500 13 3v6L9.200 7.500z" /></svg></Cell>
          <Cell className="w-8"><Mic size={15} strokeWidth={2} /></Cell>
          <Cell className="w-8"><Ellipsis size={16} /></Cell>
          <Bell size={14} strokeWidth={2} className="ml-auto" /><Fit w={8} className="ml-1 text-[13px]">1</Fit>
          <div className="ml-3.5 mr-2 grid h-8 w-14 place-items-center rounded-md bg-[#6149e6] text-white"><Fit flat w={32} className="text-[13.500px] font-bold">Send</Fit></div>
        </div>
      </div>
    </div>
  );
}

function Rail() {
  return (
    <div className="flex flex-1 flex-col items-center pt-3 text-[9.500px] font-semibold text-[#838383]">
      <div className="grid size-8 place-items-center rounded-md bg-[#f1effe] text-[#5f48e0]"><svg width="15" height="15" viewBox="0 0 15 15" fill="none" stroke="currentColor" strokeWidth="1.600"><path d="M13.300 13.300H7.500a5.900 5.900 0 1 1 5.900-5.900c0 1.400-.4 2.700-1.200 3.700z" strokeLinejoin="round" /></svg></div>
      <div className="mt-[3px] text-[#5f48e0]"><Fit w={34}>Activity</Fit></div>
      <div className="mt-[15px] h-px w-9 bg-[#e0e0e0]" />
      <svg className="mt-6" width="16" height="16" viewBox="0 0 16 16" fill="none" stroke="currentColor" strokeWidth="1.400" strokeLinecap="round"><path d="m6.800 4.300 1.900-1.900a3.300 3.300 0 0 1 4.700 4.700L11 9.500a3.300 3.300 0 0 1-4 .5M9.200 11.700l-1.900 1.900a3.300 3.300 0 0 1-4.700-4.700L5 6.500A3.300 3.300 0 0 1 9 6M6.500 9.500l3-3" /></svg>
      <Plus size={15} strokeWidth={1.800} className="mt-[32px]" />
      <div className="mt-[11px]"><Fit w={25}>More</Fit></div>
    </div>
  );
}

/* ---------- floating widgets ---------- */
function Floating() {
  return (
    <>
      <div className="absolute left-[1196px] top-[678px] grid h-10 w-[95px] place-items-center rounded-b-[20px] bg-[#a6a6a6] shadow-[0_2px_6px_rgba(0,0,0,0.08)]"><Fit flat w={61} className="-mt-[11px] font-['DejaVu_Sans',sans-serif] text-[24px] leading-7 text-[#4a79b5] [-webkit-text-stroke:0.8px_#4a79b5]">zoom</Fit></div>
      <div className="absolute left-[1316px] top-[436px] grid h-[50px] w-[50px] place-items-center rounded-l-[10px] bg-black">
        <svg width="26" height="28" viewBox="0 0 26 28" fill="#fcd53f"><path d="M17 3c.8 6 3 9.500 8.500 11.200C20 16 17.800 19.300 17 25c-.8-5.700-3-9-8.500-10.800C14 12.500 16.200 9 17 3zM4.500.500c.4 3 1.500 4.500 4 5.300-2.500.8-3.600 2.200-4 5.200-.4-3-1.500-4.400-4-5.200 2.500-.8 3.600-2.300 4-5.300zM8 19c.4 2.300 1.200 3.500 3.300 4-2.100.6-2.900 1.700-3.300 4-.4-2.300-1.200-3.400-3.300-4C6.800 22.500 7.600 21.300 8 19z" /></svg>
      </div>
      <div className="absolute left-[1316px] top-[613px] h-[45px] w-[50px] rounded-l-full bg-white pl-3 pt-[13px] text-[#12a37f] shadow-[0_0_6px_rgba(0,0,0,0.25)]"><svg width="20" height="20" viewBox="0 0 20 20" fill="none" stroke="currentColor" strokeWidth="2.200"><path d="M10 1H5C1 1 0 7 5 8h4M9 10H5c-5 0-5 8 0 9h4" /></svg></div>
      <div className="absolute left-[1326px] top-[662px] h-9 w-10 rounded-l-full bg-white" />
      <div className="absolute left-[1334px] top-[595px] flex h-[126px] w-[26px] flex-col items-center rounded-[3px] bg-[#191919] text-white">
        <div className="flex h-[17px] items-center gap-[3px]"><svg width="9" height="9" viewBox="0 0 9 9" fill="none" stroke="currentColor" strokeWidth="1.500"><path d="M1 8 8 1M2 6C1 3 4 1 7 2M7 3c1 3-2 5-5 4" /></svg><Ellipsis size={9} strokeWidth={3} /></div>
        <div className="grid h-[22px] w-[22px] place-items-center bg-[#414141]"><svg width="20" height="16" viewBox="0 0 20 16"><path d="M0 3h5l2-3h6l2 3h5v13H0z" fill="#fff" /><circle cx="10" cy="9" r="4" fill="none" stroke="#333" strokeWidth="1.200" /></svg></div>
        <svg className="mt-2" width="20" height="14" viewBox="0 0 20 14" fill="#fff"><path d="M0 1h15v12H0zM15 6l5-5v12l-5-5z" /></svg>
        <svg className="mt-[12px]" width="20" height="18" viewBox="0 0 20 18" fill="#fff"><path d="M0 0h16v2H2v13H0z" /><path d="M3.500 3H20v15H3.500z" /></svg>
        <svg className="mt-[8px]" width="20" height="20" viewBox="0 0 20 20"><path d="M8 0h4l.6 2.800 1.900 1.100 2.700-1 2 3.400-2.100 1.900v2.200l2.100 2-2 3.300-2.700-.9-1.900 1.100L12 20H8l-.6-3.100-1.900-1.100-2.700.9-2-3.300 2.100-2V8.200L.8 6.300l2-3.400 2.700 1 1.900-1.100z" fill="#fff" /><circle cx="10" cy="9.500" r="3.200" fill="#191919" /></svg>
      </div>
      <div className="absolute left-[1202px] top-[586px] h-[30px] w-[54px] rounded-br-[24px] rounded-tl-[20px] border border-[#ccc9e0] bg-white">
        <svg className="ml-1.5 mt-1.5" width="42" height="20" viewBox="0 0 42 20"><path d="M9 0A7 7 0 0 0 4 12l1 2h6V0z" fill="#11b795" /><path d="M4 16h8v3H4z" fill="#0a9a7c" /><path d="M22 14h18q-7 4-18 4z" fill="#077d68" /></svg>
      </div>
      <div className="absolute left-[1217px] top-[585px] flex h-6 w-[48px] overflow-hidden rounded-full bg-white shadow-md">
        <Cell className="w-6"><svg width="12" height="14" viewBox="0 0 12 14"><path d="M2 9.500C1 5 4.500 1 10.500 1c.5 4.500-2 8.500-6.500 8.500L2 13" fill="#8290a8" stroke="#8290a8" /><path d="M4 9 8 4" stroke="#fff" strokeWidth=".8" /></svg></Cell>
        <Cell className="w-6 bg-[#078a46] text-white"><svg width="14" height="14" viewBox="0 0 14 14" fill="#fff"><path d="M6.300 1h1.400v4H13v8H1V5h5.300z" /><path d="M4 8h2v2H4zM8 8h2v2H8z" fill="#078a46" /></svg></Cell>
      </div>
    </>
  );
}

/* ---------- taskbar ---------- */
const Count = ({ children, className }) => <span className={"absolute grid size-4 place-items-center rounded-full border border-[#9aa3a8] bg-[#2b2f33] text-[11px] font-semibold leading-none text-white " + className}>{children}</span>;

function Taskbar() {
  return (
    <div className="flex h-10 shrink-0 items-center bg-gradient-to-r from-[#20363f] via-[#21353f] to-[#1a2842] text-white">
      <Cell className="w-12"><svg width="16" height="16" viewBox="0 0 16 16" fill="#fff"><path d="M0 2.200 7 1.200v6.300H0zM8 1l8-1v7.500H8zM0 8.500h7v6.300l-7-1zM8 8.500h8V16l-8-1z" /></svg></Cell>
      <div className="flex h-10 w-[344px] items-center border border-[#c8c8c8] bg-[#f1f1f1] text-[#222]">
        <svg className="ml-[11px]" width="17" height="17" viewBox="0 0 17 17" fill="none" stroke="#111" strokeWidth="1.400"><circle cx="10.800" cy="6" r="5" /><path d="m7.200 9.800-6.500 6.500" /></svg>
        <Fit flat w={128} className="ml-[11px] text-[14px]">Type here to search</Fit>
      </div>
      <Cell className="w-12"><span className="size-[15px] rounded-full border-2 border-white" /></Cell>
      <Cell className="w-[46px]"><svg width="17" height="16" viewBox="0 0 17 16" fill="none" stroke="#fff" strokeWidth="1.300"><path d="M1 0v2.500h10.500V0M1 16v-2.500h10.500V16M1 5h10.500v6H1zM15.500 0v4M15.500 9v7" /><path d="M14 5.500h3v3h-3z" fill="#fff" stroke="none" /></svg></Cell>
      <Cell className="ml-1 w-[49px]"><svg width="24" height="24" viewBox="0 0 24 24"><defs><linearGradient id="edA" x1="0" x2="1"><stop stopColor="#2aa5e8" /><stop offset="1" stopColor="#5fdc5a" /></linearGradient></defs><circle cx="12" cy="12" r="12" fill="#1572c9" /><path d="M0 11C1 4 6 0 12 0c7 0 12 5 12 10 0 4-3 6-6 6-2.500 0-4-1-3.500-2 2-3-1-6-4.500-6-5 0-9 3-10 3z" fill="url(#edA)" /><path d="M9 10c-4 4-2 11 5 13 4 0 7-2 8.500-5-6 3-13 0-13.500-8z" fill="#0f4a97" /></svg></Cell>
      <Cell className="w-[49px]"><svg width="22" height="18" viewBox="0 0 22 18"><path d="M0 1a1 1 0 0 1 1-1h7l2 2.500H0z" fill="#e5a20f" /><path d="M0 2.500h22V18H0z" fill="#fdd566" /><path d="M4 18v-6a2 2 0 0 1 2-2h10a2 2 0 0 1 2 2v6h-4v-3H8v3z" fill="#3b94d9" /></svg></Cell>
      <Cell className="w-[49px]"><svg width="24" height="24" viewBox="0 0 24 24"><path d="M6.500 6V2.500h11V6" fill="none" stroke="#22a7f2" strokeWidth="2" /><path d="M.5 5h23v16a2 2 0 0 1-2 2h-19a2 2 0 0 1-2-2z" fill="#f4f4f4" /><path d="M7.500 9.500h4v4h-4z" fill="#f25022" /><path d="M12.500 9.500h4v4h-4z" fill="#7fba00" /><path d="M7.500 14.500h4v4h-4z" fill="#00a4ef" /><path d="M12.500 14.500h4v4h-4z" fill="#ffb900" /></svg></Cell>
      <Cell className="w-[49px]"><svg width="24" height="20" viewBox="0 0 24 20"><path d="M0 6 12 0l12 6v14H0z" fill="#fff" /><path d="M1 6.500h22l-9 5.500 5 4-9-5z" fill="#21353f" /></svg></Cell>
      <Cell className="relative h-10 w-[49px]"><svg width="24" height="24" viewBox="0 0 24 24"><circle cx="12" cy="12" r="12" fill="#fbc116" /><path d="M1.600 6A12 12 0 0 1 22.400 6L12 7 7 15z" fill="#e33b2e" /><path d="M1.600 6A12 12 0 0 0 12 24l4.500-8.500L7.500 15z" fill="#229342" /><circle cx="12" cy="12" r="5.600" fill="#fff" /><circle cx="12" cy="12" r="4.500" fill="#3d7ff0" /></svg><span className="absolute bottom-0 left-[5px] h-0.5 w-10 bg-[#76b9ed]" /></Cell>
      <Cell className="relative h-10 w-[49px] text-[#25d366]"><FaWhatsapp size={26} /><Count className="left-[29px] top-[19px]">6</Count><span className="absolute bottom-0 left-[5px] h-0.5 w-10 bg-[#76b9ed]" /></Cell>
      <div className="ml-auto flex h-10 items-center">
        <Cell className="w-6"><ChevronUp size={17} strokeWidth={1.500} /></Cell>
        <Cell className="relative w-6"><svg width="17" height="16" viewBox="0 0 17 16" fill="none" stroke="#fff" strokeWidth="1.300"><path d="m1 2.500 15-2v11M1 2.500V13h8M5 7c1-2.500 4-2.500 5 0M10 4.500V7H7.500M10 9c-1 2-4 2-5 0" /></svg><span className="absolute bottom-0 right-[3px] size-[7px] rounded-full bg-[#ff9a00]" /></Cell>
        <Cell className="w-6"><svg width="17" height="12" viewBox="0 0 17 12" fill="none" stroke="#fff" strokeWidth="1.200"><path d="M6 3h9v8H4V8M15 5.500h1.500v3H15M1 0v3M4 0v3M0 3h5v1.500a2 2 0 0 1-2.500 2zM2.500 6v3H4" /><path d="M7 5h6.500v4H6z" fill="#fff" stroke="none" /></svg></Cell>
        <Cell className="w-6"><svg width="14" height="14" viewBox="0 0 14 14" fill="none" stroke="#fff" strokeWidth="1.200"><path d="M1 13C1 6 6 1 13 1M4 13c0-5 4-9 9-9M7 13c0-3.500 2.500-6 6-6M10 13c0-1.700 1.300-3 3-3" /><circle cx="12" cy="12.300" r="1.200" fill="#fff" /></svg></Cell>
        <Cell className="w-6"><svg width="18" height="16" viewBox="0 0 18 16" fill="none" stroke="#fff" strokeWidth="1.200"><path d="M1 5.500h2.500L7.500 2v12l-4-3.500H1zM9.500 6c1 1.200 1 2.800 0 4M11.800 4c2 2.300 2 5.700 0 8M14.200 2.200c3 3.400 3 8.200 0 11.600" /></svg></Cell>
        <div className="flex w-[64px] flex-col items-center text-[12px] leading-[18px]"><Fit flat w={43}>2:51 PM</Fit><Fit flat w={46}>2/2/2025</Fit></div>
        <Cell className="relative h-10 w-[38px]"><svg width="16" height="15" viewBox="0 0 16 15"><path d="M0 0h16v12H7l-4 3v-3H0z" fill="#fff" /><path d="M3 3.200h10M3 6h10M3 8.800h6" stroke="#1b2a40" strokeWidth="1.200" /></svg><Count className="left-[19px] top-[19px]">5</Count></Cell>
        <div className="ml-[10px] mr-1 h-10 w-px bg-[#66707c]" />
      </div>
    </div>
  );
}

export default function App() {
  return (
    <div className="relative flex h-[768px] w-[1366px] flex-col overflow-hidden bg-[#2f8582] font-['Open_Sans','Noto_Sans',sans-serif]">
      <TabStrip />
      <Toolbar />
      <Bookmarks />
      <div className="flex min-h-0 flex-1 flex-col">
        <AppNav />
        <Banner />
        <Backdrop />
      </div>
      <Taskbar />
      <div className="absolute left-5 top-[181px] flex h-[497px] w-[1326px] flex-col overflow-hidden rounded-xl border border-[#e0e0e0] border-t-white bg-white">
        <DialogHeader />
        <div className="-ml-px flex min-h-0 flex-1">
          <TaskPane />
          <ActivityPane />
          <Rail />
        </div>
      </div>
      <Floating />
    </div>
  );
}
